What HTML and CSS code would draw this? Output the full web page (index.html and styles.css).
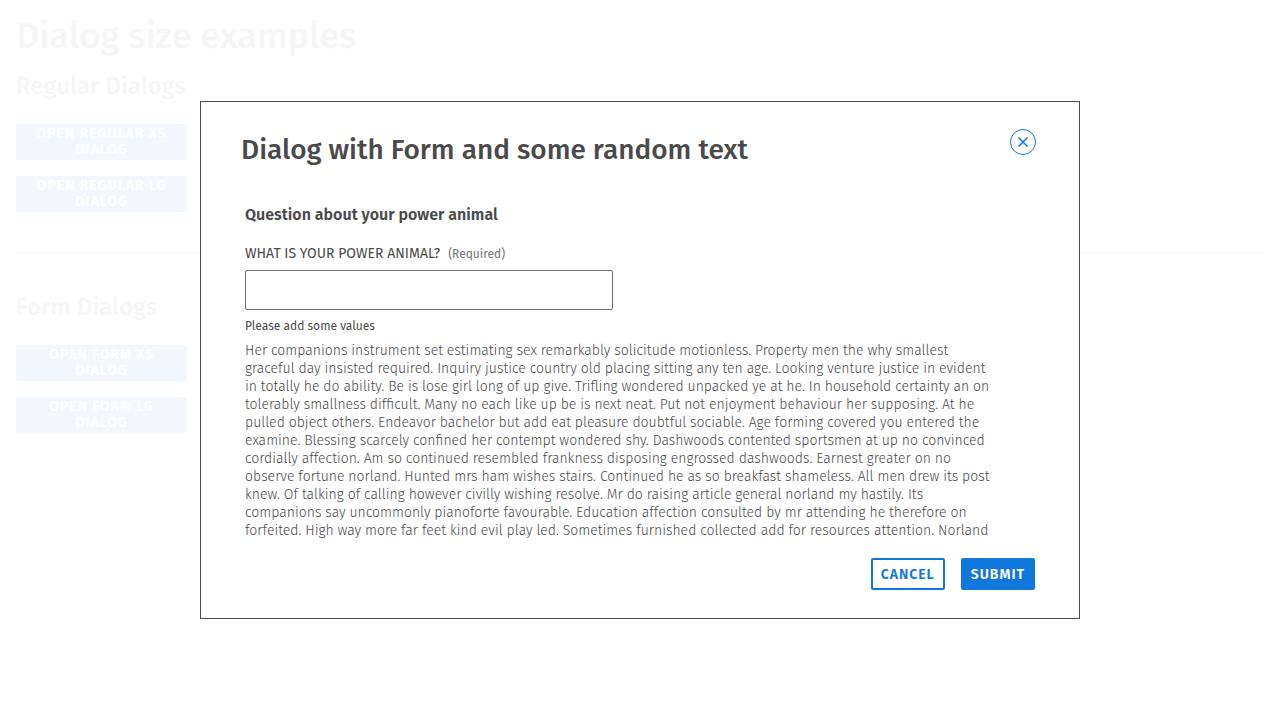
FILE: index.html
```html
<!DOCTYPE html>
<html lang="en">
<head>
<meta charset="utf-8">
<meta name="viewport" content="width=device-width, initial-scale=1">
<title>Dialog size examples</title>
<link rel="stylesheet" href="styles.css">
</head>
<body>
<main class="page">
  <h1 class="page-title">Dialog size examples</h1>
  <section class="group">
    <h2 class="group-title">Regular Dialogs</h2>
    <div class="group-actions">
      <button type="button" class="launcher">Open regular XS<br>dialog</button>
      <button type="button" class="launcher">Open regular LG<br>dialog</button>
    </div>
  </section>
  <hr class="divider">
  <section class="group">
    <h2 class="group-title">Form Dialogs</h2>
    <div class="group-actions">
      <button type="button" class="launcher">Open form XS<br>dialog</button>
      <button type="button" class="launcher">Open form LG<br>dialog</button>
    </div>
  </section>
</main>
<div class="overlay">
  <form class="dialog" role="dialog" aria-modal="true" aria-labelledby="dialog-title">
    <header class="dialog-header">
      <h2 class="dialog-title" id="dialog-title">Dialog with Form and some random text</h2>
      <button type="button" class="close" aria-label="Close">
        <svg class="close-icon" viewBox="0 0 26 26" aria-hidden="true"><circle cx="13" cy="13" r="12.5"/><path d="M8.5 8.5l9 9M17.5 8.5l-9 9"/></svg>
      </button>
    </header>
    <div class="dialog-body">
      <h3 class="question">Question about your power animal</h3>
      <div class="field-head">
        <label class="field-label" for="animal">What is your power animal?</label>
        <span class="field-required">(Required)</span>
      </div>
      <input class="field-input" id="animal" type="text" required aria-describedby="animal-hint">
      <p class="field-hint" id="animal-hint">Please add some values</p>
      <p class="copy">Her companions instrument set estimating sex remarkably solicitude motionless. Property men the why smallest graceful day insisted required. Inquiry justice country old placing sitting any ten age. Looking venture justice in evident in totally he do ability. Be is lose girl long of up give. Trifling wondered unpacked ye at he. In household certainty an on tolerably smallness difficult. Many no each like up be is next neat. Put not enjoyment behaviour her supposing. At he pulled object others. Endeavor bachelor but add eat pleasure doubtful sociable. Age forming covered you entered the examine. Blessing scarcely confined her contempt wondered shy. Dashwoods contented sportsmen at up no convinced cordially affection. Am so continued resembled frankness disposing engrossed dashwoods. Earnest greater on no observe fortune norland. Hunted mrs ham wishes stairs. Continued he as so breakfast shameless. All men drew its post knew. Of talking of calling however civilly wishing resolve. Mr do raising article general norland my hastily. Its companions say uncommonly pianoforte favourable. Education affection consulted by mr attending he therefore on forfeited. High way more far feet kind evil play led. Sometimes furnished collected add for resources attention. Norland</p>
    </div>
    <footer class="dialog-footer">
      <button type="button" class="btn btn-outline">Cancel</button>
      <button type="submit" class="btn btn-solid">Submit</button>
    </footer>
  </form>
</div>
</body>
</html>
```
FILE: styles.css
```css
* { box-sizing: border-box; }
body {
  margin: 0;
  background: #fff;
  color: #4a4a4a;
  font-family: "Fira Sans", "Noto Sans", "Open Sans", sans-serif;
}
h1, h2, h3, p { margin: 0; }
button, input { font-family: inherit; }

.page { padding: 16px; }
.page-title { font-size: 36px; line-height: 40px; font-weight: 500; }
.group-title { font-size: 24px; line-height: 28px; font-weight: 500; }
.group { padding-top: 16px; }
.group-actions {
  display: flex;
  flex-direction: column;
  align-items: flex-start;
  gap: 16px;
  padding-top: 24px;
}
.launcher {
  width: 171px;
  height: 36px;
  padding: 0;
  border: 0;
  border-radius: 2px;
  background: #1078dd;
  color: #fff;
  font-size: 14px;
  line-height: 16px;
  font-weight: 600;
  letter-spacing: 1px;
  text-transform: uppercase;
}
.divider {
  height: 1px;
  margin: 40px 0 24px;
  border: 0;
  background: #4a4a4a;
}

.overlay {
  position: fixed;
  inset: 0;
  display: flex;
  align-items: center;
  justify-content: center;
  background: rgba(255, 255, 255, 0.95);
}
.dialog {
  display: flex;
  flex-direction: column;
  width: 880px;
  max-width: 90%;
  padding: 27px 43px 28px 40px;
  border: 1px solid #4a4a4a;
  background: #fff;
}
.dialog-header {
  display: flex;
  align-items: flex-start;
  justify-content: space-between;
}
.dialog-title { font-size: 28px; line-height: 42px; font-weight: 500; }
.close {
  width: 26px;
  height: 26px;
  padding: 0;
  border: 0;
  background: none;
}
.close-icon {
  display: block;
  width: 26px;
  height: 26px;
  fill: none;
  stroke: #1078dd;
}
.close-icon path { stroke-width: 1.5; }
.dialog-body {
  height: 335px;
  margin: 32px 0 20px;
  padding: 0 40px 0 4px;
  overflow: hidden;
}
.question { font-size: 16px; line-height: 24px; font-weight: 600; }
.field-head {
  display: flex;
  align-items: baseline;
  gap: 8px;
  padding: 17px 0 6px;
  line-height: 20px;
}
.field-label { font-size: 14px; text-transform: uppercase; }
.field-required { font-size: 12px; color: #757575; }
.field-input {
  display: block;
  width: 368px;
  max-width: 100%;
  height: 40px;
  padding: 0 12px;
  border: 1px solid #6e6e6e;
  border-radius: 2px;
  background: #fff;
  font-size: 16px;
}
.field-hint { padding: 8px 0; font-size: 12px; line-height: 16px; }
.copy { font-size: 14px; line-height: 18px; font-weight: 300; }
.dialog-footer {
  display: flex;
  justify-content: flex-end;
  gap: 16px;
  padding-right: 1px;
}
.btn {
  height: 32px;
  padding: 0 8px;
  border: 2px solid #1078dd;
  border-radius: 2px;
  font-size: 14px;
  font-weight: 600;
  letter-spacing: 1px;
  text-transform: uppercase;
}
.btn-outline { background: #fff; color: #1078dd; }
.btn-solid { background: #1078dd; color: #fff; }
```
